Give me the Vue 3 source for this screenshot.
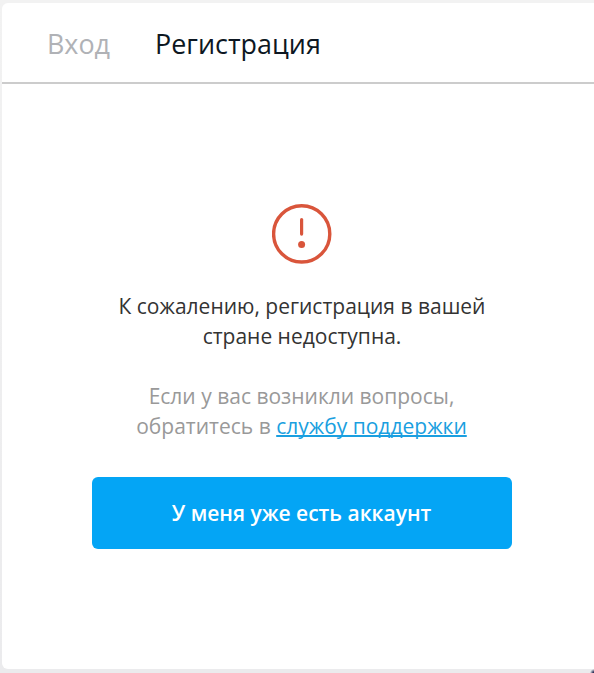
<script setup>
import { ref } from 'vue'

// Вкладки формы
const tabs = [
  { id: 'login', title: 'Вход' },
  { id: 'register', title: 'Регистрация' },
]

const activeTab = ref('register')
</script>

<template>
  <div class="page">
    <div class="modal">
      <nav class="tabs">
        <button
          v-for="tab in tabs"
          :key="tab.id"
          class="tab"
          :class="{ active: activeTab === tab.id }"
          @click="activeTab = tab.id"
        >{{ tab.title }}</button>
      </nav>

      <div class="content">
        <!-- Иконка предупреждения -->
        <svg class="icon" width="60" height="60" viewBox="0 0 60 60" fill="none">
          <circle cx="29.7" cy="29.9" r="28.1" stroke="#d9553b" stroke-width="3.4" />
          <path d="M29.6 15.6V30.1" stroke="#d9553b" stroke-width="3.2" stroke-linecap="round" />
          <circle cx="29.6" cy="40.6" r="3.5" fill="#d9553b" />
        </svg>

        <p class="message">К сожалению, регистрация в вашей<br />стране недоступна.</p>
        <p class="hint">
          Если у вас возникли вопросы,<br />обратитесь в <a href="#" class="link">службу поддержки</a>
        </p>

        <button class="btn-login" @click="activeTab = 'login'">У меня уже есть аккаунт</button>
      </div>
    </div>
  </div>
</template>

<style>
body {
  background-color: #f1f1f1;
}
</style>

<style scoped>
.page {
  box-sizing: border-box;
  height: 673px;
  padding: 3px 0 4px 2px;
  overflow: hidden;
  background:
    radial-gradient(circle at 100% 100%, #2c3158 1px, transparent 4px),
    linear-gradient(#f2f2f2, #ebebed);
  font-family: 'Open Sans', 'Noto Sans', sans-serif;
}

.modal {
  height: 666px;
  background-color: #fff;
  border-radius: 6px 0 0 6px;
}

.tabs {
  box-sizing: border-box;
  display: flex;
  align-items: center;
  gap: 45px;
  height: 81px;
  padding: 2px 45px 0;
  border-bottom: 2px solid #ccc;
}

.tab {
  padding: 0;
  border: none;
  background: none;
  font-family: inherit;
  font-size: 26.9px;
  line-height: 36px;
  color: #b0b2b6;
  cursor: pointer;
}

.tab.active {
  color: #0d1722;
}

.content {
  display: flex;
  flex-direction: column;
  align-items: center;
  padding: 120px 82px 0 90px;
  text-align: center;
}

.icon {
  display: block;
}

.message,
.hint {
  margin: 0;
  font-size: 21px;
  line-height: 30px;
  white-space: nowrap;
}

.message {
  margin-top: 27px;
  color: #333;
}

.hint {
  margin-top: 30px;
  padding-right: 1px;
  color: #999;
}

.link {
  color: #1a9fe0;
  text-decoration: underline;
  text-decoration-thickness: 2px;
  text-decoration-skip-ink: none;
}

.btn-login {
  width: 420px;
  height: 72px;
  margin-top: 36px;
  padding: 0 7px 0 6px;
  border: none;
  border-radius: 6px;
  background-color: #04a5f5;
  color: #fff;
  font-family: inherit;
  font-size: 21px;
  font-weight: 600;
  cursor: pointer;
}
</style>
